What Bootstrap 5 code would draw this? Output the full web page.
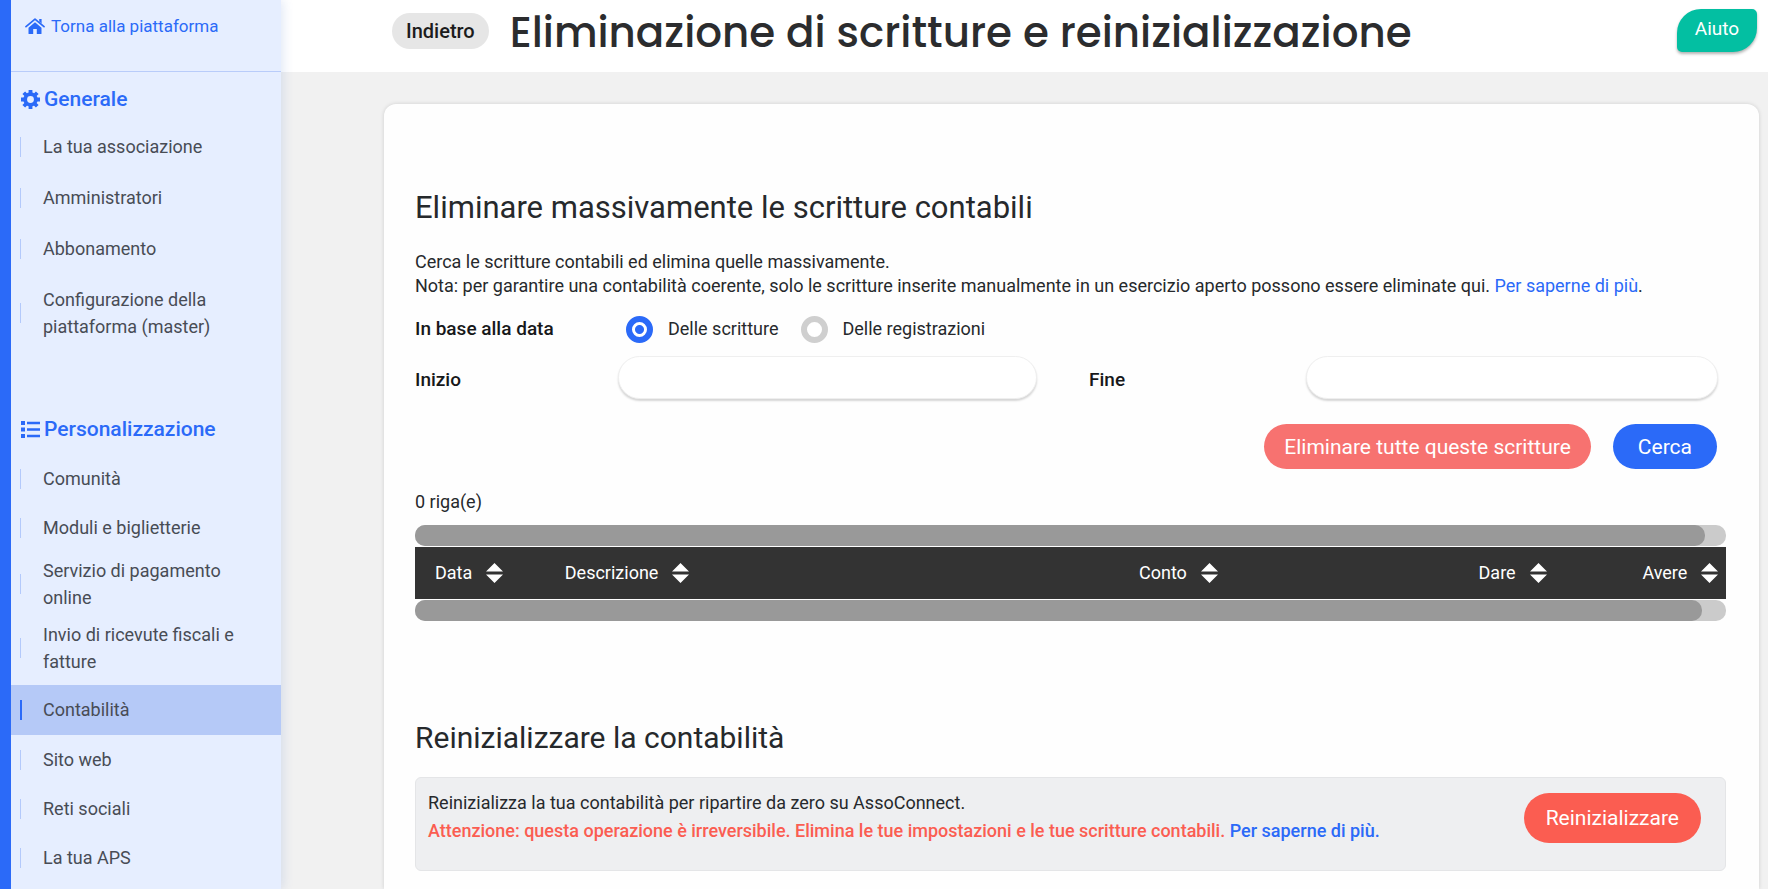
<!DOCTYPE html>
<html lang="it">
<head>
<meta charset="utf-8">
<meta name="viewport" content="width=device-width, initial-scale=1">
<title>Eliminazione di scritture e reinizializzazione</title>
<link rel="stylesheet" href="https://cdn.jsdelivr.net/npm/bootstrap@5.3.0/dist/css/bootstrap.min.css">
<style>
  :root { --brand: #2b6af8; --ink: #26292c; --danger: #fb5d51; }
  body { font-family: Roboto, "Liberation Sans", sans-serif; font-size: 18px; line-height: 24px; color: var(--ink); background: #f1f1f1; }
  a { color: var(--brand); text-decoration: none; }

  /* Sidebar */
  .side-nav { width: 281px; border-left: 11px solid var(--brand); background: #e6eeff; box-shadow: 2px 0 10px rgba(70, 110, 200, .16); z-index: 2; }
  .home-link { height: 72px; padding: 14px 0 0 14px; border-bottom: 1px solid #b9ccfa; gap: 6px; font-size: 17px; }
  .side-title { font-size: 21px; line-height: 24px; font-weight: 500; color: var(--brand); padding: 15px 0 10px 10px; gap: 4px; margin: 0; }
  .side-title-next { padding: 65px 0 13px 10px; }
  .side-title svg { flex: none; }
  .side-menu { font-size: 18px; line-height: 27px; }
  .side-menu a { position: relative; display: block; padding: 11px 16px 11px 32px; color: #484c55; }
  .side-menu.roomy a { padding-top: 12px; padding-bottom: 12px; }
  .side-menu .two-lines a { padding-top: 5px; padding-bottom: 5px; }
  .side-menu a::before { content: ""; position: absolute; left: 9px; top: 50%; height: 20px; margin-top: -10px; border-left: 1px solid #b3c9fb; }
  .side-menu .current { margin-top: 5px; }
  .side-menu .current a { padding-bottom: 12px; background: #b5c9f7; }
  .side-menu .current a::before { border-left: 2px solid var(--brand); }

  /* Header */
  .top-bar { height: 72px; background: #fff; padding: 9px 11px 0 111px; }
  .back-btn { height: 36px; padding: 0 14px; margin-top: 4px; border: 0; border-radius: 18px; background: #e6e6e6; font-size: 20px; line-height: 36px; font-weight: 500; color: #1c1c1c; }
  .page-title { font-family: Poppins, Inter, sans-serif; font-size: 42px; line-height: 48px; font-weight: 500; color: #2b2c2e; margin: 0 0 0 21px; }
  .help-btn { width: 80px; height: 43px; border: 0; border-radius: 24px 5px 24px 5px; background: #03bfa2; color: #fff; font-size: 19px; line-height: 24px; padding: 0 0 3px; box-shadow: 0 2px 3px rgba(0, 0, 0, .3); }

  /* Panel */
  .panel { margin: 32px 9px 0 103px; padding: 85px 33px 16px 31px; background: #fefefe; border-radius: 12px 12px 0 0; box-shadow: 0 0 4px rgba(0, 0, 0, .14); }
  .panel h2 { font-size: 31px; line-height: 38px; font-weight: 400; margin: 0; }
  .panel .reset-title { font-size: 30px; padding-top: 50px; }
  .intro { margin: 23px 0 0; }
  .filters { display: grid; grid-template-columns: 203px minmax(0, 419fr) 269px minmax(0, 412fr); align-items: center; padding-right: 8px; margin-top: 17px; }
  .filters .name { font-size: 19px; font-weight: 500; color: #17181a; padding-top: 4px; }
  .filters .name-end { padding-left: 52px; }
  .choices { grid-column: 2 / -1; padding-left: 8px; height: 28px; margin-bottom: 13px; }
  .filters .row-name { margin-bottom: 13px; padding-top: 0; }
  .choices .form-check-input[type=radio] { width: 27px; height: 27px; margin: 0 15px 0 0; border: 6px solid #cfcfcf; background: #fff; flex: none; box-shadow: none; }
  .choices .form-check-input[type=radio]:checked { border-color: var(--brand); background: radial-gradient(circle, var(--brand) 4px, #fff 5px); }
  .choices label + .form-check-input[type=radio] { margin-left: 22px; }
  .date-box { height: 43px; border: 1px solid #efefef; border-radius: 22px; background: #fff; box-shadow: 0 2px 2px rgba(0, 0, 0, .16); }
  .form-actions { gap: 22px; margin-top: 25px; padding-right: 9px; }
  .pill { border: 0; border-radius: 25px; color: #fff; font-size: 21px; line-height: 24px; }
  .pill-delete { height: 45px; padding: 0 20px; background: #f77270; }
  .pill-search { height: 45px; padding: 0 25px; background: var(--brand); }
  .pill-reset { height: 50px; padding: 0 22px; background: var(--danger); margin-top: 4px; }
  .row-count { margin: 21px 0 11px; }
  .track { height: 21px; border-radius: 10px; background: #cbcbcb; }
  .track .thumb { height: 100%; border-radius: 10px; background: #999; }
  .entries { width: 100%; table-layout: fixed; background: #333; color: #fff; margin: 1px 0; }
  .entries th { height: 52px; padding: 0 0 0 20px; }
  .sort-btn { display: flex; align-items: center; gap: 14px; border: 0; padding: 0; background: none; color: #fff; font-size: 18px; line-height: 24px; white-space: nowrap; }
  .reset-box { min-height: 94px; margin-top: 20px; padding: 11px 24px 0 12px; border: 1px solid #e4e5e7; border-radius: 6px; background: #eeeff1; }
  .reset-box p { line-height: 28px; }
  .warn { color: var(--danger); font-weight: 500; }
</style>
</head>
<body>
<svg width="0" height="0" class="position-absolute" aria-hidden="true">
  <symbol id="sort" viewBox="0 0 17 20"><path fill="#fff" d="M8.500 0 17 8.500H0zM0 11.500h17L8.500 20z"/></symbol>
</svg>
<div class="d-flex min-vh-100">
  <nav class="side-nav flex-shrink-0" aria-label="Menu">
    <a class="home-link d-flex" href="#">
      <svg class="mt-1" width="20" height="16" viewBox="0 0 20 16" aria-hidden="true"><path fill="#2b6af8" d="M10 4.300 3.500 9.700V15.400q0 .6.600.6H8.200V11h3.600v5h4.100q.6 0 .6-.6V9.700z"/><path fill="none" stroke="#2b6af8" stroke-width="1.700" stroke-linecap="round" stroke-linejoin="round" d="M1 8.700 10 1.200l9 7.500"/><path fill="#2b6af8" d="M14.200 1h2.400v4.600l-2.400-2z"/></svg>
      <span>Torna alla piattaforma</span>
    </a>
    <h2 class="side-title d-flex align-items-center">
      <svg width="19" height="19" viewBox="0 0 20 20" aria-hidden="true"><circle cx="10" cy="10" r="5.600" fill="none" stroke="#2b6af8" stroke-width="4"/><g stroke="#2b6af8" stroke-width="4"><path d="M10 0v4M10 16v4M0 10h4M16 10h4M2.900 2.900l2.900 2.900M14.200 14.200l2.900 2.900M2.900 17.100l2.900-2.900M14.200 5.800l2.900-2.900"/></g></svg>
      Generale
    </h2>
    <ul class="side-menu roomy list-unstyled mb-0">
      <li><a href="#">La tua associazione</a></li>
      <li><a href="#">Amministratori</a></li>
      <li><a href="#">Abbonamento</a></li>
      <li><a href="#">Configurazione della piattaforma (master)</a></li>
    </ul>
    <h2 class="side-title side-title-next d-flex align-items-center">
      <svg width="19" height="17" viewBox="0 0 19 17" aria-hidden="true"><path fill="#2b6af8" d="M0 0h4v4H0zM0 6.500h4v4H0zM0 13h4v4H0zM6 .8h13v2.400H6zM6 7.300h13v2.400H6zM6 13.800h13v2.400H6z"/></svg>
      Personalizzazione
    </h2>
    <ul class="side-menu list-unstyled mb-0">
      <li><a href="#">Comunità</a></li>
      <li><a href="#">Moduli e biglietterie</a></li>
      <li class="two-lines"><a href="#">Servizio di pagamento online</a></li>
      <li class="two-lines"><a href="#">Invio di ricevute fiscali e fatture</a></li>
      <li class="current"><a href="#" aria-current="page">Contabilità</a></li>
      <li><a href="#">Sito web</a></li>
      <li><a href="#">Reti sociali</a></li>
      <li><a href="#">La tua APS</a></li>
    </ul>
  </nav>

  <div class="d-flex flex-column flex-grow-1">
    <header class="top-bar d-flex align-items-start">
      <button type="button" class="back-btn">Indietro</button>
      <h1 class="page-title">Eliminazione di scritture e reinizializzazione</h1>
      <button type="button" class="help-btn ms-auto">Aiuto</button>
    </header>

    <main class="panel flex-grow-1">
      <h2>Eliminare massivamente le scritture contabili</h2>
      <p class="intro">Cerca le scritture contabili ed elimina quelle massivamente.<br>Nota: per garantire una contabilità coerente, solo le scritture inserite manualmente in un esercizio aperto possono essere eliminate qui. <a href="#">Per saperne di più</a>.</p>

      <form>
        <div class="filters">
          <span class="name row-name" id="basis">In base alla data</span>
          <div class="choices d-flex align-items-center" role="radiogroup" aria-labelledby="basis">
            <input class="form-check-input" type="radio" name="basis" id="by-entry" checked>
            <label for="by-entry">Delle scritture</label>
            <input class="form-check-input" type="radio" name="basis" id="by-record">
            <label for="by-record">Delle registrazioni</label>
          </div>
          <label class="name" for="start">Inizio</label>
          <input class="date-box form-control" type="text" id="start">
          <label class="name name-end" for="end">Fine</label>
          <input class="date-box form-control" type="text" id="end">
        </div>
        <div class="form-actions d-flex justify-content-end">
          <button type="button" class="pill pill-delete">Eliminare tutte queste scritture</button>
          <button type="button" class="pill pill-search">Cerca</button>
        </div>
      </form>

      <p class="row-count">0 riga(e)</p>
      <div class="track"><div class="thumb" style="width:98.400%"></div></div>
      <table class="entries">
        <colgroup><col style="width:9.900%"><col style="width:43.800%"><col style="width:25.900%"><col style="width:12.500%"><col></colgroup>
        <thead>
          <tr>
            <th scope="col"><button type="button" class="sort-btn">Data <svg width="17" height="20"><use href="#sort"/></svg></button></th>
            <th scope="col"><button type="button" class="sort-btn">Descrizione <svg width="17" height="20"><use href="#sort"/></svg></button></th>
            <th scope="col"><button type="button" class="sort-btn">Conto <svg width="17" height="20"><use href="#sort"/></svg></button></th>
            <th scope="col"><button type="button" class="sort-btn">Dare <svg width="17" height="20"><use href="#sort"/></svg></button></th>
            <th scope="col"><button type="button" class="sort-btn">Avere <svg width="17" height="20"><use href="#sort"/></svg></button></th>
          </tr>
        </thead>
      </table>
      <div class="track"><div class="thumb" style="width:98.200%"></div></div>

      <h2 class="reset-title mt-5">Reinizializzare la contabilità</h2>
      <div class="reset-box d-flex align-items-start justify-content-between">
        <div>
          <p class="mb-0">Reinizializza la tua contabilità per ripartire da zero su AssoConnect.</p>
          <p class="warn mb-0">Attenzione: questa operazione è irreversibile. Elimina le tue impostazioni e le tue scritture contabili. <a href="#">Per saperne di più.</a></p>
        </div>
        <button type="button" class="pill pill-reset">Reinizializzare</button>
      </div>
    </main>
  </div>
</div>
<script src="https://cdn.jsdelivr.net/npm/bootstrap@5.3.0/dist/js/bootstrap.bundle.min.js"></script>
</body>
</html>
